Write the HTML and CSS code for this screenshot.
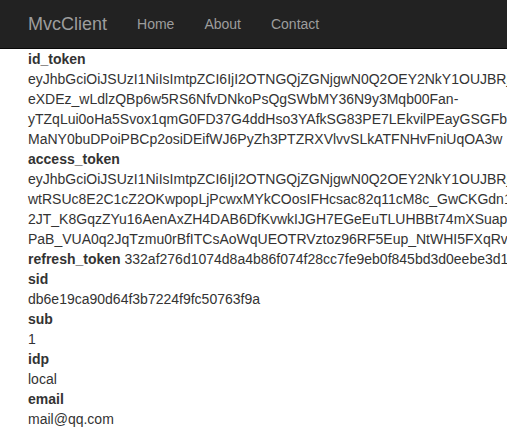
FILE: index.html
```html
<!DOCTYPE html>
<html>
<head>
<meta charset="utf-8">
<title>MvcClient</title>
<link rel="stylesheet" href="styles.css">
</head>
<body>
<nav class="navbar">
  <a class="brand" href="#">MvcClient</a>
  <ul class="nav">
    <li><a href="#">Home</a></li>
    <li><a href="#">About</a></li>
    <li><a href="#">Contact</a></li>
  </ul>
</nav>
<main class="content">
  <dl class="claims">
    <dt>id_token</dt>
    <dd><span class="line">eyJhbGciOiJSUzI1NiIsImtpZCI6IjI2OTNGQjZGNjgwN0Q2OEY2NkY1OUJBRjAzMTQ1NzYiLCJ0eXAiOiJKV1QifQ</span><span class="line">eXDEz_wLdlzQBp6w5RS6NfvDNkoPsQgSWbMY36N9y3Mqb00Fan-</span><span class="line">yTZqLui0oHa5Svox1qmG0FD37G4ddHso3YAfkSG83PE7LEkvilPEayGSGFbQk8vXqZ2</span><span class="line">MaNY0buDPoiPBCp2osiDEifWJ6PyZh3PTZRXVlvvSLkATFNHvFniUqOA3w</span></dd>
    <dt>access_token</dt>
    <dd><span class="line">eyJhbGciOiJSUzI1NiIsImtpZCI6IjI2OTNGQjZGNjgwN0Q2OEY2NkY1OUJBRjAzMTQ1NzYiLCJ0eXAiOiJKV1QifQ</span><span class="line">wtRSUc8E2C1cZ2OKwpopLjPcwxMYkCOosIFHcsac82q11cM8c_GwCKGdn1xP4aQ</span><span class="line">2JT_K8GqzZYu16AenAxZH4DAB6DfKvwkIJGH7EGeEuTLUHBBt74mXSuapQ9w</span><span class="line">PaB_VUA0q2JqTzmu0rBfITCsAoWqUEOTRVztoz96RF5Eup_NtWHI5FXqRvZk3</span></dd>
    <dt class="inline">refresh_token</dt>
    <dd class="inline">332af276d1074d8a4b86f074f28cc7fe9eb0f845bd3d0eebe3d1a7c9</dd>
    <dt>sid</dt>
    <dd>db6e19ca90d64f3b7224f9fc50763f9a</dd>
    <dt>sub</dt>
    <dd>1</dd>
    <dt>idp</dt>
    <dd>local</dd>
    <dt>email</dt>
    <dd>mail@qq.com</dd>
  </dl>
</main>
</body>
</html>
```

FILE: styles.css
```css
html, body {
  margin: 0;
  padding: 0;
  overflow: hidden;
}
body {
  font-family: "Liberation Sans", Arial, Helvetica, sans-serif;
  font-size: 14px;
  line-height: 20px;
  color: #333;
  background: #fff;
}
.navbar {
  display: flex;
  align-items: center;
  height: 48px;
  background: #222;
  border-bottom: 1px solid #080808;
  padding: 0 0 0 13px;
}
.brand {
  font-size: 18px;
  line-height: 20px;
  padding: 14px 15px;
  color: #9d9d9d;
  text-decoration: none;
}
.nav {
  display: flex;
  list-style: none;
  margin: 0;
  padding: 0;
}
.nav a {
  display: block;
  padding: 14px 15px;
  line-height: 20px;
  color: #9d9d9d;
  text-decoration: none;
}
.content {
  padding: 0 0 0 28px;
}
.claims {
  margin: 0;
  white-space: nowrap;
}
.claims dt {
  font-weight: bold;
}
.claims dd {
  margin: 0;
}
.claims .line {
  display: block;
}
.claims dt.inline,
.claims dd.inline {
  display: inline;
}
.claims dt.inline::after {
  content: " ";
}
```
